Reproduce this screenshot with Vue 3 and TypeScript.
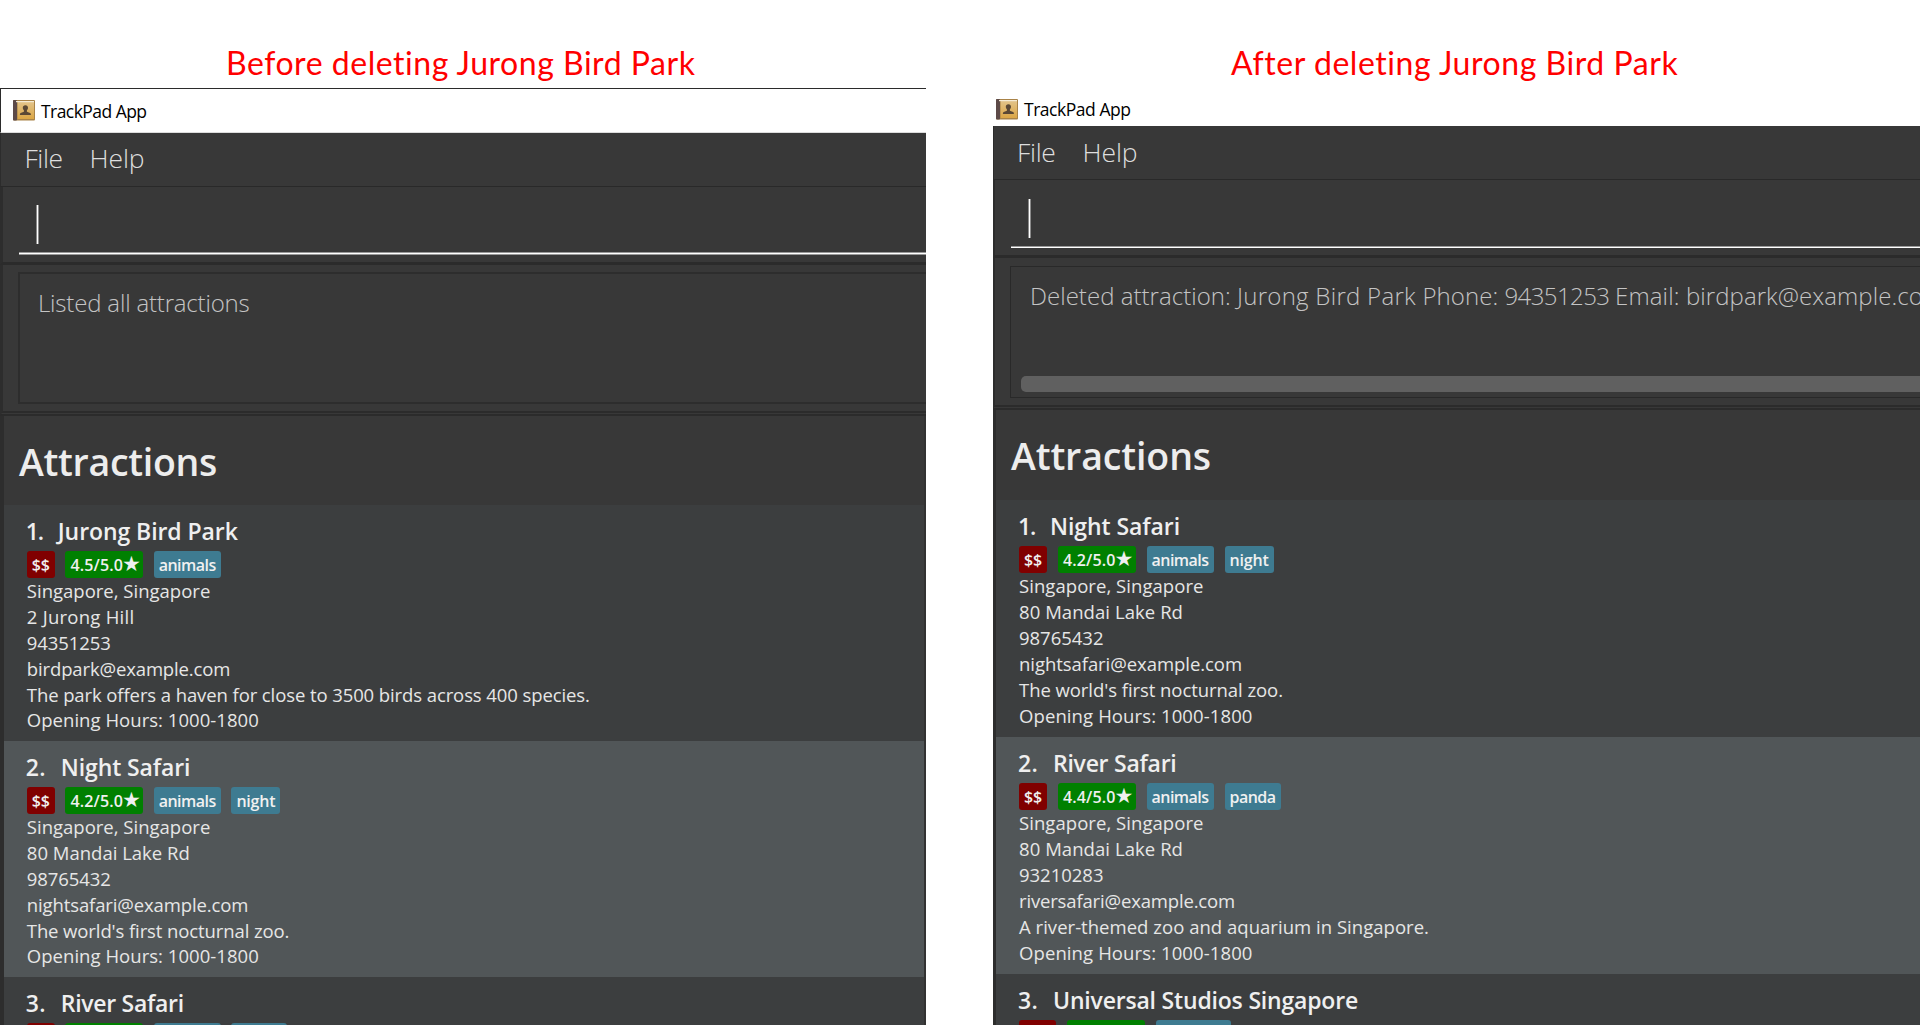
<script setup lang="ts">
interface Line { text: string; w: number }
interface Tag { text: string; kind: 'price' | 'rating' | 'tag'; w: number }
interface Attraction { no: string; noW: number; name: string; nameW: number; tags: Tag[]; lines: Line[] }
interface Pane {
  id: string
  caption: Line
  title: Line
  menu: Line[]
  result: Line[]
  scroll: boolean
  heading: Line
  rows: Attraction[]
}

// Spreads letter spacing so that a label takes exactly the given width.
const vFit = {
  mounted(el: HTMLElement, binding: { value: number }) {
    const count = (el.textContent ?? '').length
    const natural = el.getBoundingClientRect().width
    if (count) el.style.letterSpacing = `${(binding.value - natural) / count}px`
  },
}

const price = (w = 18): Tag => ({ text: w > 18 ? '$$$' : '$$', kind: 'price', w })
const rating = (text: string): Tag => ({ text, kind: 'rating', w: 52.5 })
const tag = (text: string, w: number): Tag => ({ text, kind: 'tag', w })

const panes: Pane[] = [
  {
    id: 'before',
    caption: { text: 'Before deleting Jurong Bird Park', w: 470 },
    title: { text: 'TrackPad App', w: 105.5 },
    menu: [{ text: 'File', w: 38 }, { text: 'Help', w: 55 }],
    result: [{ text: 'Listed all attractions', w: 211.5 }],
    scroll: false,
    heading: { text: 'Attractions', w: 198 },
    rows: [
      {
        no: '1.', noW: 17, name: 'Jurong Bird Park', nameW: 180,
        tags: [price(), rating('4.5/5.0'), tag('animals', 57)],
        lines: [
          { text: 'Singapore, Singapore', w: 183.5 },
          { text: '2 Jurong Hill', w: 107.5 },
          { text: '94351253', w: 84 },
          { text: 'birdpark@example.com', w: 203.5 },
          { text: 'The park offers a haven for close to 3500 birds across 400 species.', w: 563 },
          { text: 'Opening Hours: 1000-1800', w: 232 },
        ],
      },
      {
        no: '2.', noW: 20, name: 'Night Safari', nameW: 129.5,
        tags: [price(), rating('4.2/5.0'), tag('animals', 57), tag('night', 39)],
        lines: [
          { text: 'Singapore, Singapore', w: 183.5 },
          { text: '80 Mandai Lake Rd', w: 163 },
          { text: '98765432', w: 84 },
          { text: 'nightsafari@example.com', w: 221.5 },
          { text: "The world's first nocturnal zoo.", w: 262.5 },
          { text: 'Opening Hours: 1000-1800', w: 232 },
        ],
      },
      {
        no: '3.', noW: 20, name: 'River Safari', nameW: 123,
        tags: [price(), rating('4.4/5.0'), tag('animals', 57), tag('panda', 46)],
        lines: [],
      },
    ],
  },
  {
    id: 'after',
    caption: { text: 'After deleting Jurong Bird Park', w: 447 },
    title: { text: 'TrackPad App', w: 106.5 },
    menu: [{ text: 'File', w: 38.5 }, { text: 'Help', w: 55 }],
    result: [
      { text: 'Deleted attraction: ', w: 207 },
      { text: 'Jurong Bird Park ', w: 185.5 },
      { text: 'Phone: ', w: 82 },
      { text: '94351253 ', w: 110.5 },
      { text: 'Email: ', w: 71 },
      { text: 'birdpark@example.com', w: 258 },
    ],
    scroll: true,
    heading: { text: 'Attractions', w: 200 },
    rows: [
      {
        no: '1.', noW: 17, name: 'Night Safari', nameW: 130,
        tags: [price(), rating('4.2/5.0'), tag('animals', 57), tag('night', 39)],
        lines: [
          { text: 'Singapore, Singapore', w: 184.5 },
          { text: '80 Mandai Lake Rd', w: 164 },
          { text: '98765432', w: 84.5 },
          { text: 'nightsafari@example.com', w: 223 },
          { text: "The world's first nocturnal zoo.", w: 264 },
          { text: 'Opening Hours: 1000-1800', w: 233.5 },
        ],
      },
      {
        no: '2.', noW: 20, name: 'River Safari', nameW: 123.5,
        tags: [price(), rating('4.4/5.0'), tag('animals', 57), tag('panda', 46)],
        lines: [
          { text: 'Singapore, Singapore', w: 184.5 },
          { text: '80 Mandai Lake Rd', w: 164 },
          { text: '93210283', w: 84.5 },
          { text: 'riversafari@example.com', w: 216 },
          { text: 'A river-themed zoo and aquarium in Singapore.', w: 410 },
          { text: 'Opening Hours: 1000-1800', w: 233.5 },
        ],
      },
      {
        no: '3.', noW: 20, name: 'Universal Studios Singapore', nameW: 305,
        tags: [price(27), rating('4.5/5.0'), tag('rides', 65)],
        lines: [],
      },
    ],
  },
]
</script>

<template>
  <main class="page">
    <section v-for="p in panes" :key="p.id" class="pane" :class="p.id">
      <h2 class="caption"><span v-fit="p.caption.w">{{ p.caption.text }}</span></h2>
      <div class="window">
        <header class="titlebar">
          <svg class="book" width="22" height="21" viewBox="0 0 22 21">
            <defs>
              <linearGradient :id="'cover-' + p.id" x1="0" y1="0" x2="0" y2="1">
                <stop offset="0" stop-color="#e3c58d" />
                <stop offset="1" stop-color="#dba645" />
              </linearGradient>
            </defs>
            <rect x="0" y="0" width="22" height="20.5" rx="1" fill="#a98348" />
            <rect x="0" y="0" width="4" height="20.5" rx="1" fill="#5d4a48" />
            <rect x="4.6" y="1" width="16.4" height="18" :fill="`url(#cover-${p.id})`" />
            <rect x="3" y="1" width="18" height="1.2" fill="#f6ecd6" />
            <path d="M12.4 5.2c1.7 0 2.6 1.1 2.6 2.6 0 1.2-.5 2-1.1 2.5v1.500l3.200 1.200c.6.3.8.9.8 2.100H6.900c0-1.200.2-1.800.8-2.100l3.200-1.200v-1.500c-.6-.5-1.100-1.300-1.100-2.500 0-1.500.9-2.600 2.600-2.600z" fill="#5a4835" />
          </svg>
          <span v-fit="p.title.w" class="apptitle">{{ p.title.text }}</span>
        </header>
        <nav class="menu">
          <span v-for="m in p.menu" :key="m.text" class="item"><span v-fit="m.w">{{ m.text }}</span></span>
        </nav>
        <div class="command"><div class="field"><i class="caret"></i></div></div>
        <div class="result">
          <div class="resultbox">
            <div class="message"><span v-for="r in p.result" :key="r.text" v-fit="r.w">{{ r.text }}</span></div>
            <div v-if="p.scroll" class="scrollbar"></div>
          </div>
        </div>
        <div class="list">
          <h1 class="heading"><span v-fit="p.heading.w">{{ p.heading.text }}</span></h1>
          <article v-for="a in p.rows" :key="a.no" class="row">
            <h3 class="name"><span v-fit="a.noW" class="no">{{ a.no }}</span><span v-fit="a.nameW">{{ a.name }}</span></h3>
            <div class="tags">
              <span v-for="t in a.tags" :key="t.text" class="tag" :class="t.kind"><span v-fit="t.w">{{ t.text }}</span><b v-if="t.kind === 'rating'" class="star">★</b></span>
            </div>
            <p v-for="l in a.lines" :key="l.text" class="line"><span v-fit="l.w">{{ l.text }}</span></p>
          </article>
        </div>
      </div>
    </section>
  </main>
</template>

<style>
html, body { margin: 0; background: #fff; overflow: hidden; }
</style>

<style scoped>
.page {
  display: flex;
  gap: 67px;
  width: 1920px;
  height: 1025px;
  overflow: hidden;
  background: #fff;
  font-family: "Open Sans", "Noto Sans", sans-serif;
  white-space: pre;
}
.page * { box-sizing: border-box; }
.page span { display: inline-block; }
.pane {
  display: flex;
  flex-direction: column;
  width: 926px;
  flex: none;
  height: 1025px;
  overflow: hidden;
}
.after { width: 927px; }
.caption {
  flex: none;
  height: 88px;
  margin: 0;
  padding: 42px 0 0 226px;
  font: 400 32px/42px Lato, sans-serif;
  color: #f00;
}
.after .caption { padding-left: 238px; }
.window {
  flex: none;
  display: flex;
  flex-direction: column;
  height: 937px;
  overflow: hidden;
  border-top: 1px solid #2b2b2b;
  background: #383838;
}
.after .window { border-top: 0; }
.titlebar {
  flex: none;
  display: flex;
  height: 44px;
  padding: 0 0 0 12px;
  background: #fff;
  border-left: 1px solid #2b2b2b;
  border-bottom: 1px solid #dcdcdc;
}
.after .titlebar { height: 38px; border: 0; padding-left: 3px; }
.book { margin-top: 11px; flex: none; }
.apptitle {
  margin-left: 6px;
  font-size: 17.5px;
  line-height: 45px;
  color: #000;
}
.after .apptitle { line-height: 43px; }
.menu {
  flex: none;
  display: flex;
  height: 54px;
  padding-left: 23.5px;
  border-left: 1px solid #2c2c2c;
  border-bottom: 1px solid #292929;
  font-size: 26.5px;
  font-weight: 300;
  line-height: 51px;
  color: #dedede;
}
.after .menu { padding-left: 23px; line-height: 52px; }
.item + .item { margin-left: 27px; }
.command {
  flex: none;
  height: 78px;
  padding: 0 0 0 16px;
  border-left: 3px solid #2d2d2d;
  border-bottom: 3px solid #2b2b2b;
}
.field {
  display: flex;
  height: 68px;
  padding: 18px 0 0 17px;
  border-bottom: 1px solid #999;
  box-shadow: inset 0 -1px 0 #fff, inset 0 -2px 0 #999;
}
.after .command { border-left-width: 2px; }
.after .field { padding-top: 19px; box-shadow: inset 0 -1px 0 #999; border-bottom-color: #fff; }
.caret {
  width: 3px;
  height: 39px;
  background: linear-gradient(90deg, #8b8b8b 33%, #fff 33% 66%, #8b8b8b 66%);
}
.result {
  flex: none;
  height: 151px;
  padding: 7px 0 0 15px;
  border-left: 3px solid #2d2d2d;
  border-bottom: 5px double #2b2b2b;
}
.after .result { height: 152px; border-left-width: 2px; padding-top: 8px; }
.resultbox {
  height: 132px;
  padding-left: 20px;
  border: 2px solid #2d2d2d;
  border-right: 0;
  overflow: hidden;
}
.after .resultbox { border-width: 1px 0 1px 1px; border-color: #292929; padding-left: 10px; }
.message {
  margin-top: 14px;
  height: 29px;
  margin-left: -2px;
  font-size: 24px;
  font-weight: 350;
  line-height: 29px;
  color: #c4c4c4;
}
.after .message { margin-left: 9px; margin-top: 15px; line-height: 28px; }
.scrollbar {
  height: 16px;
  margin-top: 65px;
  border-radius: 5px 0 0 5px;
  background: #606060;
}
.list {
  flex: 1;
  border-left: 4px solid #2d2d2d;
}
.before .list { border-right: 2px solid #323232; }
.after .list { border-left-width: 3px; }
.heading {
  height: 89px;
  margin: 0;
  padding-left: 15px;
  font-size: 37.5px;
  font-weight: 600;
  line-height: 91px;
  color: #ededed;
}
.after .heading { height: 90px; line-height: 92px; }
.row {
  height: 236px;
  padding: 9px 0 0 23px;
  background: #3c3e3f;
  color: #e6e6e6;
}
.before .row { padding-left: 22.8px; }
.row:nth-of-type(even) { background: #515658; }
.after .row { height: 236.9px; }
.name {
  display: flex;
  height: 37px;
  margin: 0;
  font-size: 23px;
  font-weight: 600;
  line-height: 35px;
  color: #efefef;
}
.no { margin-left: -1px; margin-right: 15px; }
.tags { display: flex; gap: 11px; height: 27px; }
.before .tags { gap: 10.7px; }
.tag {
  display: inline-flex !important;
  height: 27px;
  padding: 0 5px;
  border-radius: 3px;
  background: #3e7b91;
  color: #f0f0f0;
  font-size: 16px;
  font-weight: 600;
  line-height: 28px;
}
.price { background: #800000; }
.rating { background: #008000; }
.star {
  width: 15px;
  font: 400 21px/27px "DejaVu Sans", sans-serif;
  margin-left: -1px;
  margin-right: 1px;
}
.line {
  height: 25.9px;
  margin: 0;
  font-size: 18.5px;
  line-height: 25.9px;
}
.after .line { height: 26px; line-height: 26px; }
</style>
